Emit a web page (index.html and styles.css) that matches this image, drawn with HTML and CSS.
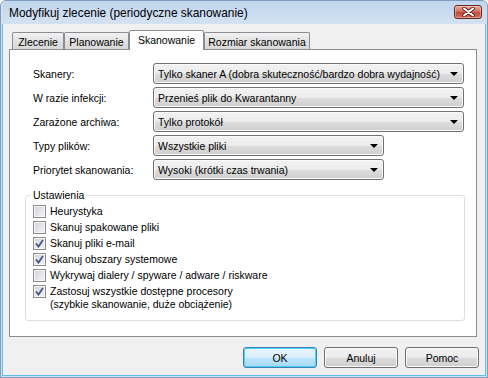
FILE: index.html
```html
<!DOCTYPE html>
<html lang="pl">
<head>
    <meta charset="UTF-8">
    <meta name="viewport" content="width=device-width, initial-scale=1.0">
    <title>Modyfikuj zlecenie</title>
    <link rel="stylesheet" href="styles.css">
</head>
<body>
    <div class="window">
        <div class="titlebar">
            <span class="title">Modyfikuj zlecenie (periodyczne skanowanie)</span>
            <span class="close-btn">
                <svg width="13" height="10" viewBox="0 0 13 10">
                    <path d="M2 1.5 L11 8.5 M11 1.5 L2 8.5" stroke="#5a1c18" stroke-width="3.6" stroke-linecap="round"/>
                    <path d="M2 1.5 L11 8.5 M11 1.5 L2 8.5" stroke="#ffffff" stroke-width="2" stroke-linecap="round"/>
                </svg>
            </span>
        </div>

        <div class="client">
            <div class="tabs">
                <div class="tab" style="width: 52px">Zlecenie</div>
                <div class="tab" style="width: 65px">Planowanie</div>
                <div class="tab active" style="width: 75px">Skanowanie</div>
                <div class="tab" style="width: 106px">Rozmiar skanowania</div>
            </div>

            <div class="panel">
                <div class="form">
                    <div class="form-row">
                        <label>Skanery:</label>
                        <div class="combo long"><span class="value">Tylko skaner A (dobra skuteczność/bardzo dobra wydajność)</span><i class="arrow"></i></div>
                    </div>
                    <div class="form-row">
                        <label>W razie infekcji:</label>
                        <div class="combo long"><span class="value">Przenieś plik do Kwarantanny</span><i class="arrow"></i></div>
                    </div>
                    <div class="form-row">
                        <label>Zarażone archiwa:</label>
                        <div class="combo long"><span class="value">Tylko protokół</span><i class="arrow"></i></div>
                    </div>
                    <div class="form-row">
                        <label>Typy plików:</label>
                        <div class="combo short"><span class="value">Wszystkie pliki</span><i class="arrow"></i></div>
                    </div>
                    <div class="form-row">
                        <label>Priorytet skanowania:</label>
                        <div class="combo short"><span class="value">Wysoki (krótki czas trwania)</span><i class="arrow"></i></div>
                    </div>
                </div>

                <fieldset class="group">
                    <legend>Ustawienia</legend>
                    <div class="check"><span class="box"></span><span>Heurystyka</span></div>
                    <div class="check"><span class="box"></span><span>Skanuj spakowane pliki</span></div>
                    <div class="check"><span class="box checked"><svg width="9" height="9" viewBox="0 0 9 9"><path d="M1 4.5 L3.5 7.5 L8 1" fill="none" stroke="#3f5589" stroke-width="1.8"/></svg></span><span>Skanuj pliki e-mail</span></div>
                    <div class="check"><span class="box checked"><svg width="9" height="9" viewBox="0 0 9 9"><path d="M1 4.5 L3.5 7.5 L8 1" fill="none" stroke="#3f5589" stroke-width="1.8"/></svg></span><span>Skanuj obszary systemowe</span></div>
                    <div class="check"><span class="box"></span><span>Wykrywaj dialery / spyware / adware / riskware</span></div>
                    <div class="check"><span class="box checked"><svg width="9" height="9" viewBox="0 0 9 9"><path d="M1 4.5 L3.5 7.5 L8 1" fill="none" stroke="#3f5589" stroke-width="1.8"/></svg></span><span>Zastosuj wszystkie dostępne procesory<br>(szybkie skanowanie, duże obciążenie)</span></div>
                </fieldset>
            </div>

            <div class="buttons">
                <button class="btn default">OK</button>
                <button class="btn">Anuluj</button>
                <button class="btn">Pomoc</button>
            </div>
        </div>
    </div>
</body>
</html>
```

FILE: styles.css
```css
body {
    margin: 0;
    font-family: "Liberation Sans", Arial, sans-serif;
    font-size: 10.5px;
    color: #000;
    background: #fff;
}
.window {
    width: 488px;
    height: 378px;
    box-sizing: border-box;
    border: 1px solid #7f9cbf;
    border-radius: 6px 6px 0 0;
    padding: 0 1px 1px;
    background: #d3e2f2;
    display: flex;
    flex-direction: column;
}
.titlebar {
    height: 23px;
    display: flex;
    align-items: center;
    padding-left: 7px;
    background: linear-gradient(#c1d6ed, #d3e2f2);
    border-radius: 5px 5px 0 0;
}
.title {
    flex: 1;
    font-size: 11.9px;
    color: #000;
}
.close-btn {
    align-self: flex-start;
    margin: 4px 4px 0 0;
    width: 26px;
    height: 12px;
    border: 1px solid #6b2620;
    border-radius: 3px;
    background: linear-gradient(#e9a99b, #d27364 45%, #c2493b 55%, #d5705c);
    box-shadow: inset 0 0 0 1px rgba(255,255,255,0.35);
    display: flex;
    align-items: center;
    justify-content: center;
}
.client {
    flex: 1;
    background: #f0f0f0;
    border: 1px solid #5cc0e6;
    border-top: none;
    padding-top: 6px;
    display: flex;
    flex-direction: column;
}
.tabs {
    display: flex;
    align-items: flex-end;
    height: 20px;
    margin: 0 0 -1px 9px;
}
.tab {
    box-sizing: border-box;
    height: 17px;
    margin-bottom: 1px;
    border: 1px solid #898c95;
    border-bottom: none;
    border-radius: 2px 2px 0 0;
    background: linear-gradient(#f3f3f3, #e2e2e2 50%, #d8d8d8);
    text-align: center;
    line-height: 18px;
    white-space: nowrap;
}
.tab.active {
    position: relative;
    z-index: 1;
    height: 20px;
    margin-bottom: 0;
    background: #fff;
}
.panel {
    height: 288px;
    box-sizing: border-box;
    margin: 0 8px 0 6px;
    border: 1px solid #898c95;
    background: #fff;
    padding: 13px 0 0 15px;
}
.form {
    display: flex;
    flex-direction: column;
    gap: 3px;
    padding-left: 8px;
}
.form-row {
    display: flex;
    align-items: center;
    height: 21px;
}
.form-row label {
    width: 120px;
}
.combo {
    box-sizing: border-box;
    height: 21px;
    border: 1px solid #707070;
    border-radius: 3px;
    background: linear-gradient(#f2f2f2, #ebebeb 50%, #dddddd 51%, #cfcfcf);
    box-shadow: inset 0 0 0 1px #fbfbfb;
    display: flex;
    align-items: center;
    padding: 0 5px 0 4px;
}
.combo.long {
    width: 311px;
}
.combo.short {
    width: 231px;
}
.combo .value {
    flex: 1;
    overflow: hidden;
    white-space: nowrap;
    margin-right: 3px;
}
.arrow {
    width: 0;
    height: 0;
    border-left: 4px solid transparent;
    border-right: 4px solid transparent;
    border-top: 4px solid #000;
    margin-top: 1px;
}
.group {
    width: 440px;
    box-sizing: border-box;
    margin: 9px 0 0;
    padding: 3px 7px 9px;
    border: 1px solid #d5dfe5;
    border-radius: 3px;
}
.group legend {
    padding: 0 2px;
    margin-left: -2px;
    line-height: 13px;
}
.check {
    display: flex;
    align-items: flex-start;
    gap: 4px;
    line-height: 13px;
    margin-bottom: 3px;
}
.check:last-child {
    margin-bottom: 0;
}
.box {
    flex: none;
    width: 13px;
    height: 13px;
    box-sizing: border-box;
    border: 1px solid #8e8f8f;
    background: linear-gradient(135deg, #d0d3d8, #f4f4f4);
    box-shadow: inset 0 0 0 1px #f4f4f4;
    display: flex;
    align-items: center;
    justify-content: center;
}
.buttons {
    display: flex;
    justify-content: flex-end;
    gap: 7px;
    margin: 10px 6px 0 0;
}
.btn {
    width: 74px;
    height: 21px;
    box-sizing: border-box;
    border: 1px solid #707070;
    border-radius: 3px;
    background: linear-gradient(#f2f2f2, #ebebeb 50%, #dddddd 51%, #cfcfcf);
    box-shadow: inset 0 0 0 1px #fbfbfb;
    font-family: "Liberation Sans", Arial, sans-serif;
    font-size: 10.5px;
    color: #000;
    padding: 0;
}
.btn.default {
    border-color: #3c7fb1;
    background: linear-gradient(#eaf6fd, #d9f0fc 50%, #bee6fd 51%, #a7d9f5);
    box-shadow: inset 0 0 0 1px #48d2f8;
}
```
